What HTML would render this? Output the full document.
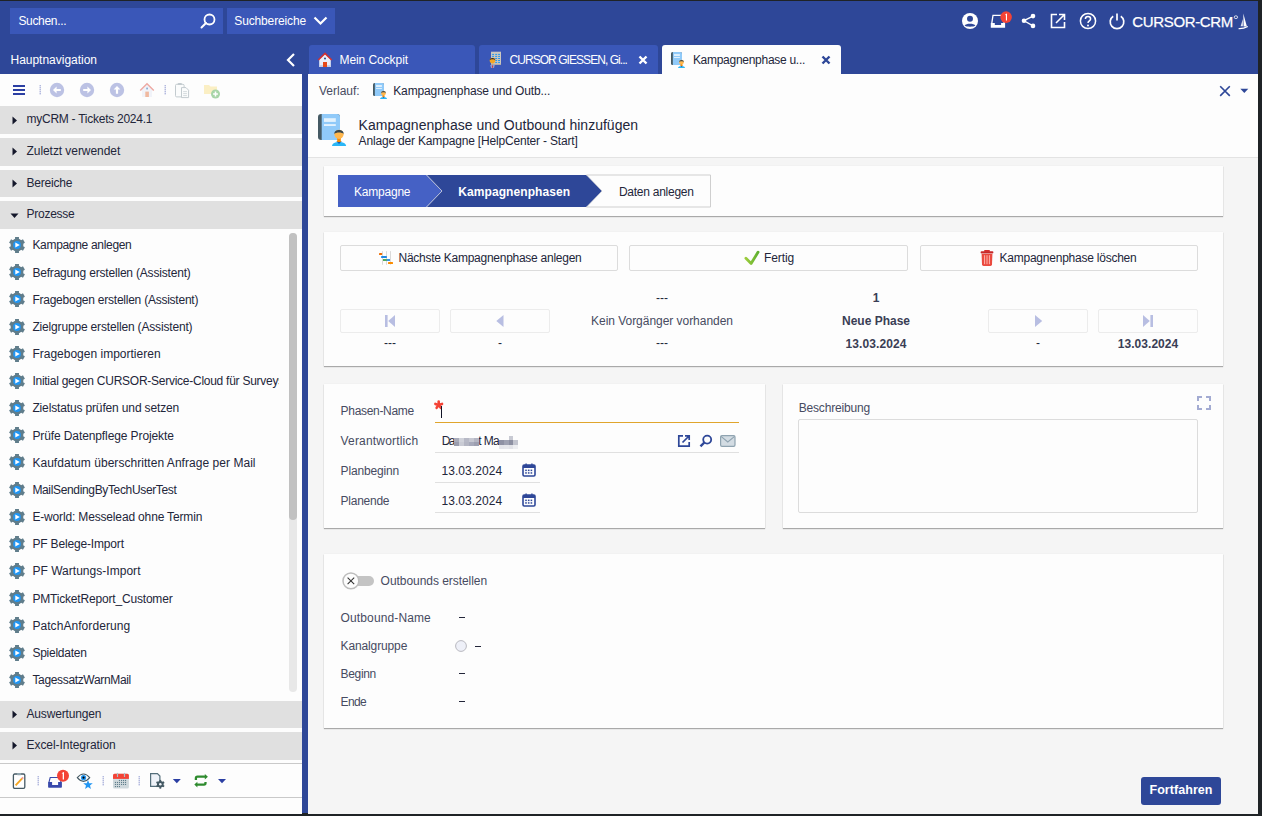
<!DOCTYPE html>
<html><head><meta charset="utf-8">
<style>
*{box-sizing:border-box;margin:0;padding:0}
html,body{width:1262px;height:816px;overflow:hidden;background:#1f2326;font-family:"Liberation Sans",sans-serif}
.a{position:absolute}
.t{position:absolute;white-space:nowrap;line-height:1}
svg.a{overflow:visible}
</style></head><body>

<div class="a" style="left:0px;top:1px;width:1258px;height:73px;background:#2e4798;"></div>
<div class="a" style="left:10px;top:8px;width:213px;height:26px;background:#3a57b8;"></div>
<div class="t" style="left:18.40px;top:15.00px;font-size:12px;color:#fff;letter-spacing:-0.322px;">Suchen...</div>
<svg class="a" style="left:199px;top:13px;" width="18" height="16" viewBox="0 0 18 16"><circle cx="10.5" cy="6.5" r="5" fill="none" stroke="#fff" stroke-width="1.8"/><line x1="7" y1="10" x2="2.5" y2="14.5" stroke="#fff" stroke-width="2" stroke-linecap="round"/></svg>
<div class="a" style="left:227px;top:8px;width:108px;height:26px;background:#3a57b8;"></div>
<div class="t" style="left:234.30px;top:15.00px;font-size:12px;color:#fff;letter-spacing:-0.140px;">Suchbereiche</div>
<svg class="a" style="left:313px;top:16px;" width="16" height="10" viewBox="0 0 16 10"><polyline points="1.5,1.5 7.5,7.5 13.5,1.5" fill="none" stroke="#fff" stroke-width="2.2"/></svg>
<svg class="a" style="left:961px;top:12px;" width="18" height="18" viewBox="0 0 18 18"><circle cx="9" cy="9" r="8" fill="#fff"/><circle cx="9" cy="6.8" r="3" fill="#2e4798"/><path d="M3.6 13.6 C5 11 13 11 14.4 13.6 C13 15.2 5 15.2 3.6 13.6Z" fill="#2e4798"/></svg>
<svg class="a" style="left:990px;top:10px;" width="22" height="20" viewBox="0 0 22 20"><path d="M1.8 13.2 L3 5.4 H13 L14.2 13.2" fill="none" stroke="#fff" stroke-width="1.3"/><path d="M0.8 13 H4.8 V15.1 H11.1 V13 H15.1 V17.8 H0.8 Z" fill="#fff"/><circle cx="16.1" cy="7.1" r="5.8" fill="#f44336"/><path d="M15.8 3.9 L17 3.5 V10.6 H15.9 V5 L14.9 5.3 Z" fill="#fff"/></svg>
<svg class="a" style="left:1021px;top:13px;" width="16" height="16" viewBox="0 0 16 16"><line x1="3" y1="7.7" x2="12" y2="3.1" stroke="#fff" stroke-width="1.3"/><line x1="3" y1="7.7" x2="12" y2="12.9" stroke="#fff" stroke-width="1.3"/><circle cx="3" cy="7.7" r="2.3" fill="#fff"/><circle cx="12" cy="3.1" r="2.3" fill="#fff"/><circle cx="12" cy="12.9" r="2.3" fill="#fff"/></svg>
<svg class="a" style="left:1050px;top:13px;" width="16" height="16" viewBox="0 0 16 16"><path d="M7 1.5 H1.5 V14.5 H14.5 V9" fill="none" stroke="#fff" stroke-width="1.6"/><path d="M6 10 L14 2 M9 1.5 H14.5 V7" fill="none" stroke="#fff" stroke-width="1.6"/></svg>
<svg class="a" style="left:1079px;top:12px;" width="18" height="18" viewBox="0 0 18 18"><circle cx="9" cy="9" r="7.6" fill="none" stroke="#fff" stroke-width="1.5"/><path d="M6.4 7 C6.4 3.6 11.6 3.6 11.6 7 C11.6 8.8 9 9 9 11" fill="none" stroke="#fff" stroke-width="1.5"/><circle cx="9" cy="13.4" r="1" fill="#fff"/></svg>
<svg class="a" style="left:1108px;top:12px;" width="18" height="18" viewBox="0 0 18 18"><path d="M5.2 4.2 A6.8 6.8 0 1 0 12.8 4.2" fill="none" stroke="#fff" stroke-width="1.7"/><line x1="9" y1="1.5" x2="9" y2="8.5" stroke="#fff" stroke-width="1.7"/></svg>
<div class="t" style="left:1132.30px;top:14.00px;font-size:15px;color:#fff;letter-spacing:-0.346px;-webkit-text-stroke:.25px #fff;">CURSOR-CRM</div>
<svg class="a" style="left:1234px;top:14px;" width="16" height="16" viewBox="0 0 16 16"><ellipse cx="1.9" cy="3.2" rx="1.7" ry="1.4" fill="none" stroke="#fff" stroke-width=".8"/><path d="M9.3 -0.6 L12.9 12.6 L9.6 12.6 Z" fill="#fff"/><path d="M8.9 5 L6.6 12.3 L8.9 12.3 Z" fill="#fff" opacity=".85"/><path d="M4.6 14.6 Q9.5 14.8 13.8 12.4" fill="none" stroke="#fff" stroke-width="1.1"/></svg>
<div class="t" style="left:10.50px;top:54.00px;font-size:12px;color:#fff;letter-spacing:-0.016px;">Hauptnavigation</div>
<svg class="a" style="left:285px;top:52px;" width="12" height="16" viewBox="0 0 12 16"><polyline points="9,2 3,8 9,14" fill="none" stroke="#fff" stroke-width="2.2"/></svg>
<div class="a" style="left:309px;top:45px;width:166px;height:29px;background:#3a57b8;border-radius:3px 3px 0 0"></div>
<div class="a" style="left:479px;top:45px;width:179px;height:29px;background:#3a57b8;border-radius:3px 3px 0 0"></div>
<div class="a" style="left:662px;top:45px;width:179px;height:29px;background:#fdfdfd;border-radius:3px 3px 0 0"></div>
<svg class="a" style="left:317px;top:52px;" width="16" height="16" viewBox="0 0 16 16"><path d="M8 1.5 L2.2 7.3 V15 H13.8 V7.3 Z" fill="#eceff8"/><rect x="2.2" y="13.2" width="11.6" height="1.8" fill="#c5cde6"/><path d="M1.3 8 L8 1.4 L14.7 8" fill="none" stroke="#d32f2f" stroke-width="1.5"/><rect x="6" y="10" width="4" height="5" fill="#e64a19"/><circle cx="8" cy="6.6" r="1" fill="#1a4d8c"/></svg>
<div class="t" style="left:339.50px;top:54.00px;font-size:12px;color:#fff;letter-spacing:-0.072px;">Mein Cockpit</div>
<svg class="a" style="left:488px;top:51px;" width="16" height="18" viewBox="0 0 16 18"><rect x="3" y="0.7" width="10" height="13" fill="#cdc8bf"/><rect x="3" y="12.7" width="10" height="1" fill="#b5afa5"/><rect x="4.1" y="2.9" width="1.9" height="1" fill="#2196f3"/><rect x="7.2" y="2.9" width="1.9" height="1" fill="#2196f3"/><rect x="10.1" y="2.9" width="1.9" height="1" fill="#2196f3"/><rect x="4.1" y="4.9" width="1.9" height="1" fill="#2196f3"/><rect x="7.2" y="4.9" width="1.9" height="1" fill="#2196f3"/><rect x="10.1" y="4.9" width="1.9" height="1" fill="#2196f3"/><rect x="7.2" y="7.0" width="1.9" height="1" fill="#2196f3"/><rect x="10.1" y="7.0" width="1.9" height="1" fill="#2196f3"/><rect x="7.2" y="9.0" width="1.9" height="1" fill="#2196f3"/><rect x="10.1" y="9.0" width="1.9" height="1" fill="#2196f3"/><rect x="7.2" y="10.9" width="1.9" height="1" fill="#2196f3"/><rect x="10.1" y="10.9" width="1.9" height="1" fill="#2196f3"/><path d="M2.2 14 L6.8 14 L6 17 L3 17Z" fill="#e8e4ee" opacity=".5"/><path d="M4.5 13.2 L3.9 16.3 L4.5 17 L5.1 16.3Z" fill="#d0342c"/><circle cx="4.5" cy="9.6" r="2.8" fill="#f5a623"/><path d="M1.7 9.2 C1.7 6.2 7.3 6.2 7.3 9.2 C6.5 8 2.5 8 1.7 9.2Z" fill="#2f2a2a"/></svg>
<div class="t" style="left:509.50px;top:54.00px;font-size:12px;color:#fff;letter-spacing:-0.946px;">CURSOR GIESSEN, Gi...</div>
<svg class="a" style="left:638px;top:55px;" width="10" height="10" viewBox="0 0 10 10"><path d="M1.5 1.5 L8.5 8.5 M8.5 1.5 L1.5 8.5" stroke="#fff" stroke-width="2.4"/></svg>
<svg class="a" style="left:671px;top:52px;" width="15" height="17" viewBox="0 0 15 17"><g transform="scale(0.5)"><path d="M3.2 0 H19 Q22 0 22 3 V23 Q22 26 19 26 H3.2 Q0 26 0 23 V3 Q0 0 3.2 0Z" fill="#455a64"/><path d="M3.7 0 H19 Q22 0 22 3 V23 Q22 26 19 26 H3.7Z" fill="#90caf9"/><rect x="6" y="4.2" width="11.8" height="3.7" fill="#e3f2fd"/><rect x="6" y="10.1" width="11.8" height="1.9" fill="#e3f2fd"/><path d="M14 32 C14 26.5 28.1 26.5 28.1 32 Z" fill="#29b6f6"/><path d="M18.3 27 L21 30 L23.8 27 Z" fill="#1e5aa8"/><rect x="19.2" y="22.5" width="3.6" height="5.5" fill="#fb8c00"/><circle cx="21" cy="20.3" r="4.6" fill="#ffb74d"/><path d="M16.4 20 C15.8 14.6 26.2 14.6 25.6 20 C24.5 18 17.5 18 16.4 20Z" fill="#37474f"/></g></svg>
<div class="t" style="left:692.90px;top:54.00px;font-size:12px;color:#23263a;letter-spacing:-0.280px;">Kampagnenphase u...</div>
<svg class="a" style="left:821px;top:55px;" width="10" height="10" viewBox="0 0 10 10"><path d="M1.5 1.5 L8.5 8.5 M8.5 1.5 L1.5 8.5" stroke="#2e4798" stroke-width="2.4"/></svg>
<div class="a" style="left:0px;top:74px;width:302px;height:740px;background:#fdfdfd;"></div>
<div class="a" style="left:302px;top:74px;width:6px;height:739px;background:#2e4798;"></div>
<svg class="a" style="left:12px;top:84px;" width="14" height="12" viewBox="0 0 14 12"><rect x="1" y="1" width="12" height="2" fill="#2b3fa3"/><rect x="1" y="5" width="12" height="2" fill="#2b3fa3"/><rect x="1" y="9" width="12" height="2" fill="#2b3fa3"/></svg>
<svg class="a" style="left:39px;top:85px;" width="2" height="10" viewBox="0 0 2 10"><rect x="0.5" y="0" width="1.5" height="1.4" fill="#b3badf"/><rect x="0.5" y="2" width="1.5" height="1.4" fill="#b3badf"/><rect x="0.5" y="4" width="1.5" height="1.4" fill="#b3badf"/><rect x="0.5" y="6" width="1.5" height="1.4" fill="#b3badf"/><rect x="0.5" y="8" width="1.5" height="1.4" fill="#b3badf"/></svg>
<svg class="a" style="left:49px;top:82px;" width="16" height="16" viewBox="0 0 16 16"><circle cx="8" cy="8" r="7.2" fill="#bcc2e4"/><g transform="rotate(0 8 8)"><path d="M4 8 L7.6 4.6 V6.9 H11.8 V9.1 H7.6 V11.4 Z" fill="#fff"/></g></svg>
<svg class="a" style="left:79px;top:82px;" width="16" height="16" viewBox="0 0 16 16"><circle cx="8" cy="8" r="7.2" fill="#bcc2e4"/><g transform="rotate(180 8 8)"><path d="M4 8 L7.6 4.6 V6.9 H11.8 V9.1 H7.6 V11.4 Z" fill="#fff"/></g></svg>
<svg class="a" style="left:109px;top:82px;" width="16" height="16" viewBox="0 0 16 16"><circle cx="8" cy="8" r="7.2" fill="#bcc2e4"/><g transform="rotate(90 8 8)"><path d="M4 8 L7.6 4.6 V6.9 H11.8 V9.1 H7.6 V11.4 Z" fill="#fff"/></g></svg>
<svg class="a" style="left:139px;top:82px;" width="16" height="16" viewBox="0 0 16 16"><path d="M8 1.5 L1 8.5 H3 V15 H13 V8.5 H15 Z" fill="#f1f3f9"/><path d="M1.2 8.6 L8 1.8 L14.8 8.6" fill="none" stroke="#eea9a2" stroke-width="1.4"/><rect x="6.3" y="9.6" width="3.6" height="5.4" fill="#f0b9a0"/><rect x="7.2" y="5.6" width="1.8" height="1.8" fill="#8fb0d4"/></svg>
<svg class="a" style="left:164px;top:85px;" width="2" height="10" viewBox="0 0 2 10"><rect x="0.5" y="0" width="1.5" height="1.4" fill="#b3badf"/><rect x="0.5" y="2" width="1.5" height="1.4" fill="#b3badf"/><rect x="0.5" y="4" width="1.5" height="1.4" fill="#b3badf"/><rect x="0.5" y="6" width="1.5" height="1.4" fill="#b3badf"/><rect x="0.5" y="8" width="1.5" height="1.4" fill="#b3badf"/></svg>
<svg class="a" style="left:174px;top:82px;" width="16" height="17" viewBox="0 0 16 17"><rect x="1.5" y="2.3" width="8.6" height="12.6" rx="1.2" fill="#fbfcfc" stroke="#c3cbcf" stroke-width="1"/><rect x="3.8" y="0.9" width="4" height="2.2" rx=".7" fill="#c3cbcf"/><path d="M7.5 5.6 H12 L14.6 8.2 V15.6 H7.5 Z" fill="#fbfcfc" stroke="#c3cbcf" stroke-width="1"/><g stroke="#c9d0d4" stroke-width=".8"><line x1="9.2" y1="9.6" x2="12.9" y2="9.6"/><line x1="9.2" y1="11.6" x2="12.9" y2="11.6"/><line x1="9.2" y1="13.6" x2="12.9" y2="13.6"/></g></svg>
<svg class="a" style="left:203px;top:82px;" width="18" height="17" viewBox="0 0 18 17"><path d="M1 3 H6 L7.5 4.5 H14 V12 H1 Z" fill="#fbefc4"/><circle cx="12.5" cy="12" r="4.5" fill="#a8d5a8"/><path d="M12.5 9.6 V14.4 M10.1 12 H14.9" stroke="#fff" stroke-width="1.5"/></svg>
<div class="a" style="left:0px;top:106px;width:302px;height:28px;background:#e0e0e0;"></div>
<svg class="a" style="left:11.5px;top:116px;" width="6" height="9" viewBox="0 0 6 9"><path d="M0.5 0.5 L5 4.5 L0.5 8.5 Z" fill="#14172a"/></svg>
<div class="t" style="left:26.50px;top:113.00px;font-size:12px;color:#23263a;letter-spacing:-0.258px;">myCRM - Tickets 2024.1</div>
<div class="a" style="left:0px;top:138px;width:302px;height:27.5px;background:#e0e0e0;"></div>
<svg class="a" style="left:11.5px;top:147px;" width="6" height="9" viewBox="0 0 6 9"><path d="M0.5 0.5 L5 4.5 L0.5 8.5 Z" fill="#14172a"/></svg>
<div class="t" style="left:26.50px;top:145.00px;font-size:12px;color:#23263a;letter-spacing:-0.060px;">Zuletzt verwendet</div>
<div class="a" style="left:0px;top:170px;width:302px;height:27.30000000000001px;background:#e0e0e0;"></div>
<svg class="a" style="left:11.5px;top:179px;" width="6" height="9" viewBox="0 0 6 9"><path d="M0.5 0.5 L5 4.5 L0.5 8.5 Z" fill="#14172a"/></svg>
<div class="t" style="left:26.50px;top:177.00px;font-size:12px;color:#23263a;letter-spacing:-0.195px;">Bereiche</div>
<div class="a" style="left:0px;top:201px;width:302px;height:27.69999999999999px;background:#e0e0e0;"></div>
<svg class="a" style="left:10px;top:213px;" width="9" height="6" viewBox="0 0 9 6"><path d="M0.5 0.5 L8.5 0.5 L4.5 5 Z" fill="#14172a"/></svg>
<div class="t" style="left:26.50px;top:208.00px;font-size:12px;color:#23263a;letter-spacing:-0.253px;">Prozesse</div>
<div class="a" style="left:0;top:0;width:279px;height:816px;overflow:hidden">
<svg class="a" style="left:9px;top:237px;" width="16" height="16" viewBox="0 0 16 16"><g transform="translate(8 8)"><circle r="6.4" fill="#607d8b"/><g fill="#607d8b"><rect x="-1.95" y="-8" width="3.9" height="16"/><rect x="-1.95" y="-8" width="3.9" height="16" transform="rotate(60)"/><rect x="-1.95" y="-8" width="3.9" height="16" transform="rotate(-60)"/></g><circle r="3.9" fill="#2196f3"/><path d="M-1.7 -2.6 L2.8 0 L-1.7 2.6 Z" fill="#fff"/></g></svg>
<div class="t" style="left:32.40px;top:239.00px;font-size:12px;color:#23263a;letter-spacing:-0.312px;">Kampagne anlegen</div>
<svg class="a" style="left:9px;top:264px;" width="16" height="16" viewBox="0 0 16 16"><g transform="translate(8 8)"><circle r="6.4" fill="#607d8b"/><g fill="#607d8b"><rect x="-1.95" y="-8" width="3.9" height="16"/><rect x="-1.95" y="-8" width="3.9" height="16" transform="rotate(60)"/><rect x="-1.95" y="-8" width="3.9" height="16" transform="rotate(-60)"/></g><circle r="3.9" fill="#2196f3"/><path d="M-1.7 -2.6 L2.8 0 L-1.7 2.6 Z" fill="#fff"/></g></svg>
<div class="t" style="left:32.40px;top:267.00px;font-size:12px;color:#23263a;letter-spacing:-0.190px;">Befragung erstellen (Assistent)</div>
<svg class="a" style="left:9px;top:291px;" width="16" height="16" viewBox="0 0 16 16"><g transform="translate(8 8)"><circle r="6.4" fill="#607d8b"/><g fill="#607d8b"><rect x="-1.95" y="-8" width="3.9" height="16"/><rect x="-1.95" y="-8" width="3.9" height="16" transform="rotate(60)"/><rect x="-1.95" y="-8" width="3.9" height="16" transform="rotate(-60)"/></g><circle r="3.9" fill="#2196f3"/><path d="M-1.7 -2.6 L2.8 0 L-1.7 2.6 Z" fill="#fff"/></g></svg>
<div class="t" style="left:32.40px;top:294.00px;font-size:12px;color:#23263a;letter-spacing:-0.238px;">Fragebogen erstellen (Assistent)</div>
<svg class="a" style="left:9px;top:319px;" width="16" height="16" viewBox="0 0 16 16"><g transform="translate(8 8)"><circle r="6.4" fill="#607d8b"/><g fill="#607d8b"><rect x="-1.95" y="-8" width="3.9" height="16"/><rect x="-1.95" y="-8" width="3.9" height="16" transform="rotate(60)"/><rect x="-1.95" y="-8" width="3.9" height="16" transform="rotate(-60)"/></g><circle r="3.9" fill="#2196f3"/><path d="M-1.7 -2.6 L2.8 0 L-1.7 2.6 Z" fill="#fff"/></g></svg>
<div class="t" style="left:32.40px;top:321.00px;font-size:12px;color:#23263a;letter-spacing:-0.169px;">Zielgruppe erstellen (Assistent)</div>
<svg class="a" style="left:9px;top:346px;" width="16" height="16" viewBox="0 0 16 16"><g transform="translate(8 8)"><circle r="6.4" fill="#607d8b"/><g fill="#607d8b"><rect x="-1.95" y="-8" width="3.9" height="16"/><rect x="-1.95" y="-8" width="3.9" height="16" transform="rotate(60)"/><rect x="-1.95" y="-8" width="3.9" height="16" transform="rotate(-60)"/></g><circle r="3.9" fill="#2196f3"/><path d="M-1.7 -2.6 L2.8 0 L-1.7 2.6 Z" fill="#fff"/></g></svg>
<div class="t" style="left:32.40px;top:348.00px;font-size:12px;color:#23263a;letter-spacing:0.005px;">Fragebogen importieren</div>
<svg class="a" style="left:9px;top:373px;" width="16" height="16" viewBox="0 0 16 16"><g transform="translate(8 8)"><circle r="6.4" fill="#607d8b"/><g fill="#607d8b"><rect x="-1.95" y="-8" width="3.9" height="16"/><rect x="-1.95" y="-8" width="3.9" height="16" transform="rotate(60)"/><rect x="-1.95" y="-8" width="3.9" height="16" transform="rotate(-60)"/></g><circle r="3.9" fill="#2196f3"/><path d="M-1.7 -2.6 L2.8 0 L-1.7 2.6 Z" fill="#fff"/></g></svg>
<div class="t" style="left:32.40px;top:375.00px;font-size:12px;color:#23263a;letter-spacing:-0.258px;">Initial gegen CURSOR-Service-Cloud für Surveys</div>
<svg class="a" style="left:9px;top:400px;" width="16" height="16" viewBox="0 0 16 16"><g transform="translate(8 8)"><circle r="6.4" fill="#607d8b"/><g fill="#607d8b"><rect x="-1.95" y="-8" width="3.9" height="16"/><rect x="-1.95" y="-8" width="3.9" height="16" transform="rotate(60)"/><rect x="-1.95" y="-8" width="3.9" height="16" transform="rotate(-60)"/></g><circle r="3.9" fill="#2196f3"/><path d="M-1.7 -2.6 L2.8 0 L-1.7 2.6 Z" fill="#fff"/></g></svg>
<div class="t" style="left:32.40px;top:402.00px;font-size:12px;color:#23263a;letter-spacing:-0.145px;">Zielstatus prüfen und setzen</div>
<svg class="a" style="left:9px;top:427px;" width="16" height="16" viewBox="0 0 16 16"><g transform="translate(8 8)"><circle r="6.4" fill="#607d8b"/><g fill="#607d8b"><rect x="-1.95" y="-8" width="3.9" height="16"/><rect x="-1.95" y="-8" width="3.9" height="16" transform="rotate(60)"/><rect x="-1.95" y="-8" width="3.9" height="16" transform="rotate(-60)"/></g><circle r="3.9" fill="#2196f3"/><path d="M-1.7 -2.6 L2.8 0 L-1.7 2.6 Z" fill="#fff"/></g></svg>
<div class="t" style="left:32.40px;top:430.00px;font-size:12px;color:#23263a;letter-spacing:-0.104px;">Prüfe Datenpflege Projekte</div>
<svg class="a" style="left:9px;top:454px;" width="16" height="16" viewBox="0 0 16 16"><g transform="translate(8 8)"><circle r="6.4" fill="#607d8b"/><g fill="#607d8b"><rect x="-1.95" y="-8" width="3.9" height="16"/><rect x="-1.95" y="-8" width="3.9" height="16" transform="rotate(60)"/><rect x="-1.95" y="-8" width="3.9" height="16" transform="rotate(-60)"/></g><circle r="3.9" fill="#2196f3"/><path d="M-1.7 -2.6 L2.8 0 L-1.7 2.6 Z" fill="#fff"/></g></svg>
<div class="t" style="left:32.40px;top:457.00px;font-size:12px;color:#23263a;letter-spacing:0.043px;">Kaufdatum überschritten Anfrage per Mail</div>
<svg class="a" style="left:9px;top:482px;" width="16" height="16" viewBox="0 0 16 16"><g transform="translate(8 8)"><circle r="6.4" fill="#607d8b"/><g fill="#607d8b"><rect x="-1.95" y="-8" width="3.9" height="16"/><rect x="-1.95" y="-8" width="3.9" height="16" transform="rotate(60)"/><rect x="-1.95" y="-8" width="3.9" height="16" transform="rotate(-60)"/></g><circle r="3.9" fill="#2196f3"/><path d="M-1.7 -2.6 L2.8 0 L-1.7 2.6 Z" fill="#fff"/></g></svg>
<div class="t" style="left:32.40px;top:484.00px;font-size:12px;color:#23263a;letter-spacing:-0.346px;">MailSendingByTechUserTest</div>
<svg class="a" style="left:9px;top:509px;" width="16" height="16" viewBox="0 0 16 16"><g transform="translate(8 8)"><circle r="6.4" fill="#607d8b"/><g fill="#607d8b"><rect x="-1.95" y="-8" width="3.9" height="16"/><rect x="-1.95" y="-8" width="3.9" height="16" transform="rotate(60)"/><rect x="-1.95" y="-8" width="3.9" height="16" transform="rotate(-60)"/></g><circle r="3.9" fill="#2196f3"/><path d="M-1.7 -2.6 L2.8 0 L-1.7 2.6 Z" fill="#fff"/></g></svg>
<div class="t" style="left:32.40px;top:511.00px;font-size:12px;color:#23263a;letter-spacing:-0.158px;">E-world: Messelead ohne Termin</div>
<svg class="a" style="left:9px;top:536px;" width="16" height="16" viewBox="0 0 16 16"><g transform="translate(8 8)"><circle r="6.4" fill="#607d8b"/><g fill="#607d8b"><rect x="-1.95" y="-8" width="3.9" height="16"/><rect x="-1.95" y="-8" width="3.9" height="16" transform="rotate(60)"/><rect x="-1.95" y="-8" width="3.9" height="16" transform="rotate(-60)"/></g><circle r="3.9" fill="#2196f3"/><path d="M-1.7 -2.6 L2.8 0 L-1.7 2.6 Z" fill="#fff"/></g></svg>
<div class="t" style="left:32.40px;top:538.00px;font-size:12px;color:#23263a;letter-spacing:-0.159px;">PF Belege-Import</div>
<svg class="a" style="left:9px;top:563px;" width="16" height="16" viewBox="0 0 16 16"><g transform="translate(8 8)"><circle r="6.4" fill="#607d8b"/><g fill="#607d8b"><rect x="-1.95" y="-8" width="3.9" height="16"/><rect x="-1.95" y="-8" width="3.9" height="16" transform="rotate(60)"/><rect x="-1.95" y="-8" width="3.9" height="16" transform="rotate(-60)"/></g><circle r="3.9" fill="#2196f3"/><path d="M-1.7 -2.6 L2.8 0 L-1.7 2.6 Z" fill="#fff"/></g></svg>
<div class="t" style="left:32.40px;top:565.00px;font-size:12px;color:#23263a;letter-spacing:0.029px;">PF Wartungs-Import</div>
<svg class="a" style="left:9px;top:590px;" width="16" height="16" viewBox="0 0 16 16"><g transform="translate(8 8)"><circle r="6.4" fill="#607d8b"/><g fill="#607d8b"><rect x="-1.95" y="-8" width="3.9" height="16"/><rect x="-1.95" y="-8" width="3.9" height="16" transform="rotate(60)"/><rect x="-1.95" y="-8" width="3.9" height="16" transform="rotate(-60)"/></g><circle r="3.9" fill="#2196f3"/><path d="M-1.7 -2.6 L2.8 0 L-1.7 2.6 Z" fill="#fff"/></g></svg>
<div class="t" style="left:32.40px;top:593.00px;font-size:12px;color:#23263a;letter-spacing:-0.181px;">PMTicketReport_Customer</div>
<svg class="a" style="left:9px;top:617px;" width="16" height="16" viewBox="0 0 16 16"><g transform="translate(8 8)"><circle r="6.4" fill="#607d8b"/><g fill="#607d8b"><rect x="-1.95" y="-8" width="3.9" height="16"/><rect x="-1.95" y="-8" width="3.9" height="16" transform="rotate(60)"/><rect x="-1.95" y="-8" width="3.9" height="16" transform="rotate(-60)"/></g><circle r="3.9" fill="#2196f3"/><path d="M-1.7 -2.6 L2.8 0 L-1.7 2.6 Z" fill="#fff"/></g></svg>
<div class="t" style="left:32.40px;top:620.00px;font-size:12px;color:#23263a;letter-spacing:0.067px;">PatchAnforderung</div>
<svg class="a" style="left:9px;top:645px;" width="16" height="16" viewBox="0 0 16 16"><g transform="translate(8 8)"><circle r="6.4" fill="#607d8b"/><g fill="#607d8b"><rect x="-1.95" y="-8" width="3.9" height="16"/><rect x="-1.95" y="-8" width="3.9" height="16" transform="rotate(60)"/><rect x="-1.95" y="-8" width="3.9" height="16" transform="rotate(-60)"/></g><circle r="3.9" fill="#2196f3"/><path d="M-1.7 -2.6 L2.8 0 L-1.7 2.6 Z" fill="#fff"/></g></svg>
<div class="t" style="left:32.40px;top:647.00px;font-size:12px;color:#23263a;letter-spacing:-0.242px;">Spieldaten</div>
<svg class="a" style="left:9px;top:672px;" width="16" height="16" viewBox="0 0 16 16"><g transform="translate(8 8)"><circle r="6.4" fill="#607d8b"/><g fill="#607d8b"><rect x="-1.95" y="-8" width="3.9" height="16"/><rect x="-1.95" y="-8" width="3.9" height="16" transform="rotate(60)"/><rect x="-1.95" y="-8" width="3.9" height="16" transform="rotate(-60)"/></g><circle r="3.9" fill="#2196f3"/><path d="M-1.7 -2.6 L2.8 0 L-1.7 2.6 Z" fill="#fff"/></g></svg>
<div class="t" style="left:32.40px;top:674.00px;font-size:12px;color:#23263a;letter-spacing:-0.339px;">TagessatzWarnMail</div>
</div>
<div class="a" style="left:289px;top:233px;width:8px;height:459px;background:#e8e8e8;border-radius:4px"></div>
<div class="a" style="left:289px;top:233px;width:8px;height:287px;background:#c1c1c1;border-radius:4px"></div>
<div class="a" style="left:0px;top:701px;width:302px;height:26.700000000000045px;background:#e0e0e0;"></div>
<svg class="a" style="left:11.5px;top:710px;" width="6" height="9" viewBox="0 0 6 9"><path d="M0.5 0.5 L5 4.5 L0.5 8.5 Z" fill="#14172a"/></svg>
<div class="t" style="left:26.50px;top:708.00px;font-size:12px;color:#23263a;letter-spacing:-0.152px;">Auswertungen</div>
<div class="a" style="left:0px;top:732px;width:302px;height:27.5px;background:#e0e0e0;"></div>
<svg class="a" style="left:11.5px;top:741px;" width="6" height="9" viewBox="0 0 6 9"><path d="M0.5 0.5 L5 4.5 L0.5 8.5 Z" fill="#14172a"/></svg>
<div class="t" style="left:26.50px;top:739.00px;font-size:12px;color:#23263a;letter-spacing:-0.050px;">Excel-Integration</div>
<div class="a" style="left:0px;top:763px;width:302px;height:1px;background:#c9c9c9;"></div>
<div class="a" style="left:0px;top:797px;width:302px;height:1px;background:#c9c9c9;"></div>
<svg class="a" style="left:12px;top:772px;" width="14" height="18" viewBox="0 0 14 18"><rect x="1.4" y="2" width="11.4" height="14.4" rx="1.3" fill="#fff" stroke="#455a64" stroke-width="1.3"/><rect x="5" y="1" width="4.2" height="2.2" rx=".7" fill="#90a4ae"/><path d="M3.6 13.4 L10.2 6.4" stroke="#f5a623" stroke-width="1.9"/><path d="M10 6.6 L11.2 5.3" stroke="#ef9a9a" stroke-width="1.9"/></svg>
<svg class="a" style="left:37px;top:776px;" width="2" height="10" viewBox="0 0 2 10"><rect x="0.5" y="0" width="1.5" height="1.4" fill="#b3badf"/><rect x="0.5" y="2" width="1.5" height="1.4" fill="#b3badf"/><rect x="0.5" y="4" width="1.5" height="1.4" fill="#b3badf"/><rect x="0.5" y="6" width="1.5" height="1.4" fill="#b3badf"/><rect x="0.5" y="8" width="1.5" height="1.4" fill="#b3badf"/></svg>
<svg class="a" style="left:47px;top:769px;" width="24" height="20" viewBox="0 0 24 20"><path d="M2 13.2 L3.2 8.5 H12.8 L14 13.2" fill="none" stroke="#3949ab" stroke-width="1.1"/><path d="M1.1 13 H5.1 V15.9 H11.1 V13 H14.9 V18 Q14.9 18.8 14.1 18.8 H1.9 Q1.1 18.8 1.1 18 Z" fill="#3949ab"/><circle cx="16" cy="6.8" r="6" fill="#f44336"/><path d="M15.6 3.4 L17 2.9 V10.6 H15.7 V4.6 L14.6 5 Z" fill="#fff"/></svg>
<svg class="a" style="left:76px;top:772px;" width="18" height="18" viewBox="0 0 18 18"><path d="M1.3 5.7 Q7.5 -1.6 13.7 5.7 Q7.5 13 1.3 5.7Z" fill="#fff" stroke="#455a64" stroke-width="1.1"/><circle cx="7.55" cy="5.7" r="2.6" fill="#2196f3"/><circle cx="7.55" cy="5.7" r="1.1" fill="#000"/><polygon points="12.00,7.90 13.23,11.20 16.76,11.35 14.00,13.55 14.94,16.95 12.00,15.00 9.06,16.95 10.00,13.55 7.24,11.35 10.77,11.20" fill="#2196f3"/></svg>
<svg class="a" style="left:102px;top:776px;" width="2" height="10" viewBox="0 0 2 10"><rect x="0.5" y="0" width="1.5" height="1.4" fill="#b3badf"/><rect x="0.5" y="2" width="1.5" height="1.4" fill="#b3badf"/><rect x="0.5" y="4" width="1.5" height="1.4" fill="#b3badf"/><rect x="0.5" y="6" width="1.5" height="1.4" fill="#b3badf"/><rect x="0.5" y="8" width="1.5" height="1.4" fill="#b3badf"/></svg>
<svg class="a" style="left:112px;top:772px;" width="18" height="18" viewBox="0 0 18 18"><rect x="1" y="1.8" width="15.9" height="14.8" rx="1.6" fill="#cfd8dc"/><path d="M1 3.4 Q1 1.8 2.6 1.8 H15.3 Q16.9 1.8 16.9 3.4 V6.9 H1 Z" fill="#f44336"/><rect x="1" y="6.9" width="15.9" height=".6" fill="#cde3ea"/><rect x="4.9" y="0.8" width="1.2" height="4.2" rx=".6" fill="#b0bec5"/><rect x="11.9" y="0.8" width="1.2" height="4.2" rx=".6" fill="#b0bec5"/><rect x="6.9" y="7.9" width="1.1" height="1.1" fill="#607d8b"/><rect x="9.0" y="7.9" width="1.1" height="1.1" fill="#607d8b"/><rect x="11.0" y="7.9" width="1.1" height="1.1" fill="#607d8b"/><rect x="13.0" y="7.9" width="1.1" height="1.1" fill="#607d8b"/><rect x="2.9" y="9.9" width="1.1" height="1.1" fill="#607d8b"/><rect x="4.9" y="9.9" width="1.1" height="1.1" fill="#607d8b"/><rect x="6.9" y="9.9" width="1.1" height="1.1" fill="#607d8b"/><rect x="9.0" y="9.9" width="1.1" height="1.1" fill="#607d8b"/><rect x="11.0" y="9.9" width="1.1" height="1.1" fill="#607d8b"/><rect x="13.0" y="9.9" width="1.1" height="1.1" fill="#607d8b"/><rect x="2.9" y="11.9" width="1.1" height="1.1" fill="#607d8b"/><rect x="4.9" y="11.9" width="1.1" height="1.1" fill="#607d8b"/><rect x="6.9" y="11.9" width="1.1" height="1.1" fill="#607d8b"/><rect x="9.0" y="11.9" width="1.1" height="1.1" fill="#607d8b"/><rect x="11.0" y="11.9" width="1.1" height="1.1" fill="#607d8b"/><rect x="13.0" y="11.9" width="1.1" height="1.1" fill="#607d8b"/><rect x="2.9" y="14.0" width="1.1" height="1.1" fill="#607d8b"/><rect x="4.9" y="14.0" width="1.1" height="1.1" fill="#607d8b"/><rect x="6.9" y="14.0" width="1.1" height="1.1" fill="#607d8b"/></svg>
<svg class="a" style="left:138px;top:776px;" width="2" height="10" viewBox="0 0 2 10"><rect x="0.5" y="0" width="1.5" height="1.4" fill="#b3badf"/><rect x="0.5" y="2" width="1.5" height="1.4" fill="#b3badf"/><rect x="0.5" y="4" width="1.5" height="1.4" fill="#b3badf"/><rect x="0.5" y="6" width="1.5" height="1.4" fill="#b3badf"/><rect x="0.5" y="8" width="1.5" height="1.4" fill="#b3badf"/></svg>
<svg class="a" style="left:149px;top:772px;" width="18" height="18" viewBox="0 0 18 18"><path d="M1.6 1.6 H8.4 L10.9 4.1 V14.4 H1.6 Z" fill="#eef2f8" stroke="#546e7a" stroke-width="1.2"/><g transform="translate(11.3 12.3)"><circle r="3.3" fill="#455a64"/><g fill="#455a64"><rect x="-0.9" y="-4.4" width="1.8" height="8.8"/><rect x="-0.9" y="-4.4" width="1.8" height="8.8" transform="rotate(60)"/><rect x="-0.9" y="-4.4" width="1.8" height="8.8" transform="rotate(-60)"/></g><circle r="1.3" fill="#eef2f8"/></g></svg>
<svg class="a" style="left:172px;top:779px;" width="10" height="6" viewBox="0 0 10 6"><path d="M0.8 0 H8.8 L4.8 4.2 Z" fill="#2b3fa3"/></svg>
<svg class="a" style="left:193px;top:773px;" width="17" height="16" viewBox="0 0 17 16"><path d="M2.9 6.9 V5.2 Q2.9 3.7 4.4 3.7 H12.6" fill="none" stroke="#2e8b2e" stroke-width="2.3"/><path d="M11.8 0.9 L14.9 3.7 L11.8 6.5 Z" fill="#2e8b2e"/><path d="M12.5 9 V10.1 Q12.5 11.6 11 11.6 H3.6" fill="none" stroke="#2e8b2e" stroke-width="2.3"/><path d="M4.4 8.8 L1.3 11.6 L4.4 14.4 Z" fill="#2e8b2e"/></svg>
<svg class="a" style="left:217px;top:779px;" width="10" height="6" viewBox="0 0 10 6"><path d="M1 0 H9 L5 4.2 Z" fill="#2b3fa3"/></svg>
<div class="a" style="left:308px;top:74px;width:950px;height:740px;background:#f5f5f5;"></div>
<div class="a" style="left:308px;top:74px;width:950px;height:83px;background:#fdfdfd;"></div>
<div class="a" style="left:308px;top:157px;width:950px;height:1px;background:#e3e3e3;"></div>
<div class="t" style="left:319.00px;top:85.00px;font-size:12px;color:#474b61;letter-spacing:-0.012px;">Verlauf:</div>
<svg class="a" style="left:373px;top:83px;" width="15" height="17" viewBox="0 0 15 17"><g transform="scale(0.5)"><path d="M3.2 0 H19 Q22 0 22 3 V23 Q22 26 19 26 H3.2 Q0 26 0 23 V3 Q0 0 3.2 0Z" fill="#455a64"/><path d="M3.7 0 H19 Q22 0 22 3 V23 Q22 26 19 26 H3.7Z" fill="#90caf9"/><rect x="6" y="4.2" width="11.8" height="3.7" fill="#e3f2fd"/><rect x="6" y="10.1" width="11.8" height="1.9" fill="#e3f2fd"/><path d="M14 32 C14 26.5 28.1 26.5 28.1 32 Z" fill="#29b6f6"/><path d="M18.3 27 L21 30 L23.8 27 Z" fill="#1e5aa8"/><rect x="19.2" y="22.5" width="3.6" height="5.5" fill="#fb8c00"/><circle cx="21" cy="20.3" r="4.6" fill="#ffb74d"/><path d="M16.4 20 C15.8 14.6 26.2 14.6 25.6 20 C24.5 18 17.5 18 16.4 20Z" fill="#37474f"/></g></svg>
<div class="t" style="left:393.20px;top:85.00px;font-size:12px;color:#23263a;letter-spacing:-0.120px;">Kampagnenphase und Outb...</div>
<svg class="a" style="left:1219px;top:85px;" width="12" height="12" viewBox="0 0 12 12"><path d="M1.2 1.3 L10.8 10.9 M10.8 1.3 L1.2 10.9" stroke="#2e4798" stroke-width="1.6"/></svg>
<svg class="a" style="left:1240px;top:88px;" width="9" height="6" viewBox="0 0 9 6"><path d="M0.3 0.8 H8.3 L4.3 5 Z" fill="#2e4798"/></svg>
<svg class="a" style="left:318px;top:114px;" width="30" height="34" viewBox="0 0 30 34"><g transform="scale(1)"><path d="M3.2 0 H19 Q22 0 22 3 V23 Q22 26 19 26 H3.2 Q0 26 0 23 V3 Q0 0 3.2 0Z" fill="#455a64"/><path d="M3.7 0 H19 Q22 0 22 3 V23 Q22 26 19 26 H3.7Z" fill="#90caf9"/><rect x="6" y="4.2" width="11.8" height="3.7" fill="#e3f2fd"/><rect x="6" y="10.1" width="11.8" height="1.9" fill="#e3f2fd"/><path d="M14 32 C14 26.5 28.1 26.5 28.1 32 Z" fill="#29b6f6"/><path d="M18.3 27 L21 30 L23.8 27 Z" fill="#1e5aa8"/><rect x="19.2" y="22.5" width="3.6" height="5.5" fill="#fb8c00"/><circle cx="21" cy="20.3" r="4.6" fill="#ffb74d"/><path d="M16.4 20 C15.8 14.6 26.2 14.6 25.6 20 C24.5 18 17.5 18 16.4 20Z" fill="#37474f"/></g></svg>
<div class="t" style="left:358.60px;top:118.00px;font-size:14px;color:#23263a;letter-spacing:0.022px;">Kampagnenphase und Outbound hinzufügen</div>
<div class="t" style="left:358.60px;top:135.00px;font-size:12px;color:#23263a;letter-spacing:-0.178px;">Anlage der Kampagne [HelpCenter - Start]</div>
<div class="a" style="left:324px;top:166px;width:899px;height:50px;background:#fdfdfd;box-shadow:0 1px 1px rgba(0,0,0,.3),0 0 1px rgba(0,0,0,.08)"></div>
<div class="a" style="left:324px;top:232px;width:899px;height:134px;background:#fdfdfd;box-shadow:0 1px 1px rgba(0,0,0,.3),0 0 1px rgba(0,0,0,.08)"></div>
<div class="a" style="left:324px;top:384px;width:441px;height:144px;background:#fdfdfd;box-shadow:0 1px 1px rgba(0,0,0,.3),0 0 1px rgba(0,0,0,.08)"></div>
<div class="a" style="left:783px;top:384px;width:440px;height:144px;background:#fdfdfd;box-shadow:0 1px 1px rgba(0,0,0,.3),0 0 1px rgba(0,0,0,.08)"></div>
<div class="a" style="left:324px;top:554px;width:899px;height:174px;background:#fdfdfd;box-shadow:0 1px 1px rgba(0,0,0,.3),0 0 1px rgba(0,0,0,.08)"></div>
<svg class="a" style="left:337px;top:174px;" width="376" height="34" viewBox="0 0 376 34"><path d="M336 1 H373.5 V33 H336" fill="#fdfdfd" stroke="#cfcfcf" stroke-width="1"/>
<path d="M89.5 1 H249.5 L265 17 L249.5 33 H89.5 L105 17 Z" fill="#2e4798"/>
<path d="M1 1 H89.5 L105 17 L89.5 33 H1 Z" fill="#4561c5"/>
<path d="M89.5 1 L105 17 L89.5 33" fill="none" stroke="#b8bfd8" stroke-width="1"/>
<path d="M249.5 1 L265 17 L249.5 33" fill="none" stroke="#d0d0d0" stroke-width="0.6"/>
<path d="M249.5 1 H336 M249.5 33 H336" stroke="#cfcfcf" stroke-width="1"/></svg>
<div class="t" style="left:354.10px;top:186.00px;font-size:12px;color:#fff;letter-spacing:-0.231px;">Kampagne</div>
<div class="t" style="left:458.20px;top:186.00px;font-size:12px;color:#fff;font-weight:700;letter-spacing:0.087px;">Kampagnenphasen</div>
<div class="t" style="left:618.90px;top:186.00px;font-size:12px;color:#23263a;letter-spacing:-0.251px;">Daten anlegen</div>
<div class="a" style="left:340px;top:245px;width:278px;height:26px;background:#fdfdfd;border:1px solid #dcdcdc;border-radius:2px"></div>
<div class="a" style="left:629px;top:245px;width:279px;height:26px;background:#fdfdfd;border:1px solid #dcdcdc;border-radius:2px"></div>
<div class="a" style="left:920px;top:245px;width:278px;height:26px;background:#fdfdfd;border:1px solid #dcdcdc;border-radius:2px"></div>
<svg class="a" style="left:378px;top:249px;" width="16" height="17" viewBox="0 0 16 17"><g stroke="#d6d6d6" stroke-width=".9"><line x1="4.5" y1="2.1" x2="4.5" y2="15.8"/><line x1="8.5" y1="2.1" x2="8.5" y2="15.8"/><line x1="12.5" y1="2.1" x2="12.5" y2="15.8"/></g><rect x="1" y="4.1" width="3.1" height="1.8" rx=".4" fill="#ef6c00"/><rect x="3.1" y="7" width="5.8" height="1.9" rx=".5" fill="#1e88e5"/><rect x="5" y="10.1" width="3.9" height="1.8" fill="#43a047"/><rect x="8.9" y="10.1" width="3.1" height="1.8" fill="#1e88e5"/><rect x="10" y="13" width="5" height="1.9" rx=".5" fill="#fb8c00"/></svg>
<div class="t" style="left:398.50px;top:252.00px;font-size:12px;color:#23263a;letter-spacing:-0.261px;">Nächste Kampagnenphase anlegen</div>
<svg class="a" style="left:743px;top:250px;" width="17" height="16" viewBox="0 0 17 16"><defs><linearGradient id="gck" x1="0" y1="0" x2="1" y2="0"><stop offset="0" stop-color="#9ccc3c"/><stop offset="1" stop-color="#5fb030"/></linearGradient></defs><path d="M2.9 8.3 L8.1 13.5 L15.1 2.1" fill="none" stroke="url(#gck)" stroke-width="2.8" stroke-linejoin="round" stroke-linecap="round"/></svg>
<div class="t" style="left:763.90px;top:252.00px;font-size:12px;color:#23263a;letter-spacing:-0.062px;">Fertig</div>
<svg class="a" style="left:980px;top:249px;" width="14" height="18" viewBox="0 0 14 18"><path d="M1.6 5 H12.4 L12 15.6 Q11.9 17 10.5 17 H3.5 Q2.1 17 2 15.6 Z" fill="#ea4a3f"/><rect x="0.6" y="2.2" width="12.8" height="2.2" rx="1" fill="#c62828"/><rect x="4" y="1.1" width="6" height="2" rx="1" fill="#d32f2f"/><g stroke="#ffb4ae" stroke-width="1"><line x1="4.6" y1="6.2" x2="4.6" y2="15.2"/><line x1="7" y1="6.2" x2="7" y2="15.2"/><line x1="9.4" y1="6.2" x2="9.4" y2="15.2"/></g></svg>
<div class="t" style="left:999.50px;top:252.00px;font-size:12px;color:#23263a;letter-spacing:-0.232px;">Kampagnenphase löschen</div>
<div class="a" style="left:340px;top:309px;width:100px;height:24px;background:#fdfdfd;border:1px solid #ececec;border-radius:2px"></div>
<div class="a" style="left:450px;top:309px;width:100px;height:24px;background:#fdfdfd;border:1px solid #ececec;border-radius:2px"></div>
<div class="a" style="left:988px;top:309px;width:100px;height:24px;background:#fdfdfd;border:1px solid #ececec;border-radius:2px"></div>
<div class="a" style="left:1098px;top:309px;width:100px;height:24px;background:#fdfdfd;border:1px solid #ececec;border-radius:2px"></div>
<svg class="a" style="left:384px;top:314px;" width="12" height="14" viewBox="0 0 12 14"><rect x="1" y="1" width="2.6" height="12" fill="#b8bee2"/><path d="M11 1 V13 L4.2 7 Z" fill="#b8bee2"/></svg>
<svg class="a" style="left:495px;top:314px;" width="10" height="14" viewBox="0 0 10 14"><path d="M8.5 1 V13 L1.3 7 Z" fill="#b8bee2"/></svg>
<svg class="a" style="left:1034px;top:314px;" width="10" height="14" viewBox="0 0 10 14"><path d="M1 1 V13 L8.2 7 Z" fill="#b8bee2"/></svg>
<svg class="a" style="left:1142px;top:314px;" width="12" height="14" viewBox="0 0 12 14"><path d="M1 1 V13 L7.8 7 Z" fill="#b8bee2"/><rect x="8.4" y="1" width="2.6" height="12" fill="#b8bee2"/></svg>
<div class="t" style="left:656.01px;top:292.00px;font-size:12px;color:#23263a;">---</div>
<div class="t" style="left:872.66px;top:292.00px;font-size:12px;color:#3a3e55;font-weight:700;">1</div>
<div class="t" style="left:591.05px;top:315.00px;font-size:12px;color:#474b61;letter-spacing:-0.037px;">Kein Vorgänger vorhanden</div>
<div class="t" style="left:842.00px;top:315.00px;font-size:12px;color:#3a3e55;font-weight:700;letter-spacing:-0.004px;">Neue Phase</div>
<div class="t" style="left:384.01px;top:337.00px;font-size:12px;color:#23263a;">---</div>
<div class="t" style="left:498.00px;top:337.00px;font-size:12px;color:#23263a;">-</div>
<div class="t" style="left:656.01px;top:337.00px;font-size:12px;color:#23263a;">---</div>
<div class="t" style="left:845.50px;top:338.00px;font-size:12px;color:#3a3e55;font-weight:700;letter-spacing:0.094px;">13.03.2024</div>
<div class="t" style="left:1036.00px;top:337.00px;font-size:12px;color:#23263a;">-</div>
<div class="t" style="left:1117.75px;top:338.00px;font-size:12px;color:#3a3e55;font-weight:700;letter-spacing:0.044px;">13.03.2024</div>
<div class="t" style="left:340.60px;top:405.00px;font-size:12px;color:#474b61;letter-spacing:-0.319px;">Phasen-Name</div>
<div class="a" style="left:435px;top:422px;width:304px;height:1px;background:#e0a52c;"></div>
<svg class="a" style="left:433px;top:399px;" width="12" height="12" viewBox="0 0 12 12"><g transform="translate(5.7 6)" stroke="#f44336" stroke-width="2.6" stroke-linecap="round"><line x1="0" y1="0" x2="0.00" y2="-3.50"/><line x1="0" y1="0" x2="3.33" y2="-1.08"/><line x1="0" y1="0" x2="2.06" y2="2.83"/><line x1="0" y1="0" x2="-2.06" y2="2.83"/><line x1="0" y1="0" x2="-3.33" y2="-1.08"/></g></svg>
<div class="a" style="left:441px;top:406px;width:1px;height:12px;background:#111426;"></div>
<div class="t" style="left:340.60px;top:435.00px;font-size:12px;color:#474b61;letter-spacing:0.173px;">Verantwortlich</div>
<div class="a" style="left:435px;top:452px;width:304px;height:1px;background:#e0e0e0;"></div>
<div class="t" style="left:441.70px;top:435.00px;font-size:12px;color:#23263a;letter-spacing:-1.620px;">Da</div>
<div class="t" style="left:478.30px;top:435.00px;font-size:12px;color:#23263a;">t</div>
<div class="t" style="left:483.80px;top:435.00px;font-size:12px;color:#23263a;letter-spacing:-0.835px;">Ma</div>
<div class="a" style="left:454px;top:438px;width:5px;height:4px;background:#a9acba;"></div>
<div class="a" style="left:459px;top:438px;width:5px;height:4px;background:#d0d2da;"></div>
<div class="a" style="left:464px;top:438px;width:5px;height:4px;background:#b7b9c6;"></div>
<div class="a" style="left:469px;top:438px;width:5px;height:4px;background:#c6c8d2;"></div>
<div class="a" style="left:474px;top:438px;width:5px;height:4px;background:#b5b7c4;"></div>
<div class="a" style="left:454px;top:442px;width:5px;height:4px;background:#9a9dae;"></div>
<div class="a" style="left:459px;top:442px;width:5px;height:4px;background:#c9cbd4;"></div>
<div class="a" style="left:464px;top:442px;width:5px;height:4px;background:#b4b6c3;"></div>
<div class="a" style="left:469px;top:442px;width:5px;height:4px;background:#a7aabb;"></div>
<div class="a" style="left:474px;top:442px;width:5px;height:4px;background:#9da0b1;"></div>
<div class="a" style="left:508.6px;top:436.0px;width:4.7999999999999545px;height:4.300000000000011px;background:#c8cad3;"></div>
<div class="a" style="left:499.0px;top:440.3px;width:4.800000000000011px;height:4.300000000000011px;background:#8f92a4;"></div>
<div class="a" style="left:503.8px;top:440.3px;width:4.800000000000011px;height:4.300000000000011px;background:#9fa2b2;"></div>
<div class="a" style="left:508.6px;top:440.3px;width:4.7999999999999545px;height:4.300000000000011px;background:#8d90a2;"></div>
<div class="a" style="left:513.4px;top:440.3px;width:4.800000000000068px;height:4.300000000000011px;background:#c3c5cf;"></div>
<div class="a" style="left:499.0px;top:444.6px;width:4.800000000000011px;height:4.2999999999999545px;background:#e4e5ea;"></div>
<div class="a" style="left:503.8px;top:444.6px;width:4.800000000000011px;height:4.2999999999999545px;background:#e6e7eb;"></div>
<div class="a" style="left:508.6px;top:444.6px;width:4.7999999999999545px;height:4.2999999999999545px;background:#e2e3e8;"></div>
<div class="a" style="left:513.4px;top:444.6px;width:4.800000000000068px;height:4.2999999999999545px;background:#eeeff2;"></div>
<svg class="a" style="left:677px;top:434px;" width="14" height="14" viewBox="0 0 14 14"><path d="M6 1.8 H1.8 V12.2 H12.2 V8" fill="none" stroke="#2e4798" stroke-width="1.7"/><path d="M5.5 8.5 L12 2 M8 1.8 H12.2 V6" fill="none" stroke="#2e4798" stroke-width="1.7"/></svg>
<svg class="a" style="left:699px;top:434px;" width="14" height="14" viewBox="0 0 14 14"><circle cx="8.2" cy="5.6" r="4" fill="none" stroke="#2e4798" stroke-width="1.8"/><path d="M5.3 8.5 L1.5 12.3" stroke="#2e4798" stroke-width="2.4"/></svg>
<svg class="a" style="left:719px;top:434px;" width="18" height="14" viewBox="0 0 18 14"><rect x="1.6" y="1.6" width="14.4" height="10.8" rx="1.4" fill="#d3dce3" stroke="#8fa3b0" stroke-width="1.2"/><path d="M2 2.4 L8.8 8 L15.6 2.4" fill="none" stroke="#8fa3b0" stroke-width="1.1"/></svg>
<div class="t" style="left:340.60px;top:465.00px;font-size:12px;color:#474b61;letter-spacing:-0.176px;">Planbeginn</div>
<div class="t" style="left:441.50px;top:465.00px;font-size:12px;color:#23263a;letter-spacing:0.064px;">13.03.2024</div>
<div class="a" style="left:435px;top:482px;width:105px;height:1px;background:#e0e0e0;"></div>
<svg class="a" style="left:522px;top:463.2px;" width="14" height="14" viewBox="0 0 14 14"><rect x="1" y="2" width="12" height="11" rx="1.2" fill="none" stroke="#2e4798" stroke-width="1.6"/><rect x="1" y="2" width="12" height="3" fill="#2e4798"/><rect x="3.4" y="0.5" width="1.4" height="2.6" fill="#2e4798"/><rect x="9.2" y="0.5" width="1.4" height="2.6" fill="#2e4798"/><rect x="3.2" y="6.6" width="1.6" height="1.5" fill="#2e4798"/><rect x="5.9" y="6.6" width="1.6" height="1.5" fill="#2e4798"/><rect x="8.6" y="6.6" width="1.6" height="1.5" fill="#2e4798"/><rect x="3.2" y="9.2" width="1.6" height="1.5" fill="#2e4798"/><rect x="5.9" y="9.2" width="1.6" height="1.5" fill="#2e4798"/><rect x="8.6" y="9.2" width="1.6" height="1.5" fill="#2e4798"/></svg>
<div class="t" style="left:340.60px;top:495.00px;font-size:12px;color:#474b61;letter-spacing:-0.264px;">Planende</div>
<div class="t" style="left:441.50px;top:495.00px;font-size:12px;color:#23263a;letter-spacing:0.064px;">13.03.2024</div>
<div class="a" style="left:435px;top:512px;width:105px;height:1px;background:#e0e0e0;"></div>
<svg class="a" style="left:522px;top:493.3px;" width="14" height="14" viewBox="0 0 14 14"><rect x="1" y="2" width="12" height="11" rx="1.2" fill="none" stroke="#2e4798" stroke-width="1.6"/><rect x="1" y="2" width="12" height="3" fill="#2e4798"/><rect x="3.4" y="0.5" width="1.4" height="2.6" fill="#2e4798"/><rect x="9.2" y="0.5" width="1.4" height="2.6" fill="#2e4798"/><rect x="3.2" y="6.6" width="1.6" height="1.5" fill="#2e4798"/><rect x="5.9" y="6.6" width="1.6" height="1.5" fill="#2e4798"/><rect x="8.6" y="6.6" width="1.6" height="1.5" fill="#2e4798"/><rect x="3.2" y="9.2" width="1.6" height="1.5" fill="#2e4798"/><rect x="5.9" y="9.2" width="1.6" height="1.5" fill="#2e4798"/><rect x="8.6" y="9.2" width="1.6" height="1.5" fill="#2e4798"/></svg>
<div class="t" style="left:798.70px;top:402.00px;font-size:12px;color:#474b61;letter-spacing:-0.174px;">Beschreibung</div>
<div class="a" style="left:798px;top:419px;width:400px;height:94px;border:1px solid #dcdcdc;border-radius:2px;background:#fdfdfd"></div>
<svg class="a" style="left:1197px;top:396px;" width="14" height="14" viewBox="0 0 14 14"><path d="M1 5 V1 H5 M9 1 H13 V5 M13 9 V13 H9 M5 13 H1 V9" fill="none" stroke="#a3abd2" stroke-width="2"/></svg>
<div class="a" style="left:343px;top:576px;width:31px;height:10px;background:#c4c4c4;border-radius:5px"></div>
<svg class="a" style="left:342px;top:572px;" width="18" height="18" viewBox="0 0 18 18"><circle cx="8.9" cy="8.9" r="7.9" fill="#fdfdfd" stroke="#bdbdbd" stroke-width="1.5"/><path d="M5.6 5.6 L12.2 12.2 M12.2 5.6 L5.6 12.2" stroke="#333" stroke-width="1.05"/></svg>
<div class="t" style="left:380.60px;top:575.00px;font-size:12px;color:#474b61;letter-spacing:-0.048px;">Outbounds erstellen</div>
<div class="t" style="left:340.60px;top:612.00px;font-size:12px;color:#474b61;letter-spacing:0.122px;">Outbound-Name</div>
<div class="t" style="left:340.60px;top:640.00px;font-size:12px;color:#474b61;letter-spacing:-0.133px;">Kanalgruppe</div>
<div class="t" style="left:340.60px;top:668.00px;font-size:12px;color:#474b61;letter-spacing:-0.344px;">Beginn</div>
<div class="t" style="left:340.60px;top:696.00px;font-size:12px;color:#474b61;letter-spacing:-0.657px;">Ende</div>
<div class="a" style="left:459px;top:617px;width:6px;height:1px;background:#23263a;"></div>
<div class="a" style="left:475.3px;top:646px;width:6.0px;height:1px;background:#23263a;"></div>
<div class="a" style="left:459px;top:673px;width:6px;height:1px;background:#23263a;"></div>
<div class="a" style="left:459px;top:701px;width:6px;height:1px;background:#23263a;"></div>
<svg class="a" style="left:454px;top:639px;" width="14" height="14" viewBox="0 0 14 14"><circle cx="7" cy="7" r="5.4" fill="#eef0f8" stroke="#b9b9c0" stroke-width="1"/></svg>
<div class="a" style="left:1141px;top:777px;width:80px;height:28px;background:#2e4798;border-radius:3px"></div>
<div class="t" style="left:1149.50px;top:784.00px;font-size:12.5px;color:#fff;font-weight:700;letter-spacing:0.050px;">Fortfahren</div>
</body></html>
